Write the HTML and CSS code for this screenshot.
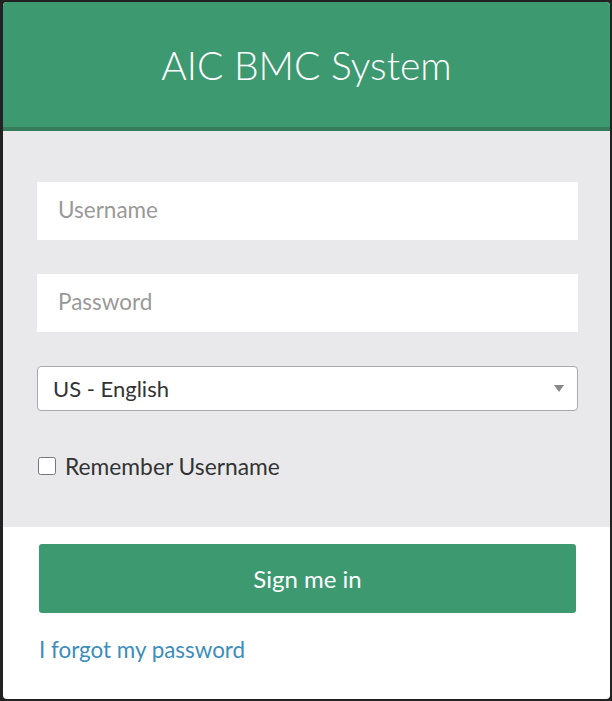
FILE: index.html
```html
<!DOCTYPE html>
<html>
<head>
  <link rel="stylesheet" href="styles.css">
</head>
<body>
  <div class="login-box">
    <div class="login-logo">AIC BMC System</div>

    <form class="login-body">
      <input class="form-control" type="text" placeholder="Username">
      <input class="form-control" type="password" placeholder="Password">
      <div class="select-wrap">
        <select class="lang-select">
          <option>US - English</option>
        </select>
        <span class="select-arrow"></span>
      </div>
      <label class="remember">
        <input type="checkbox" class="remember-box">
        <span>Remember Username</span>
      </label>
    </form>

    <div class="login-footer">
      <button class="btn-signin" type="button">Sign me in</button>
      <a href="#" class="forgot">I forgot my password</a>
    </div>
  </div>
</body>
</html>
```

FILE: styles.css
```css
html, body {
  height: 100%;
}

body {
  margin: 0;
  padding: 2px 2px 2px 3px;
  box-sizing: border-box;
  background-color: #222;
  font-family: Lato, 'Open Sans', sans-serif;
}

.login-box {
  height: 100%;
  display: flex;
  flex-direction: column;
  background: #fff;
  border-radius: 4px;
  overflow: hidden;
}

.login-logo {
  height: 125px;
  flex-shrink: 0;
  display: flex;
  align-items: center;
  justify-content: center;
  background: #3d9970;
  border-bottom: 4px solid #347c5b;
  color: #fff;
  font-size: 39px;
  font-weight: 300;
}

.login-body {
  margin: 0;
  padding: 51px 32px 0 34px;
  height: 396px;
  box-sizing: border-box;
  flex-shrink: 0;
  display: flex;
  flex-direction: column;
  background: #e9e9eb;
}

.form-control {
  box-sizing: border-box;
  height: 58px;
  margin: 0 0 34px;
  padding: 0 21px 3px;
  border: none;
  outline: none;
  background: #fff;
  font-family: inherit;
  font-size: 22.5px;
  color: #333;
}

.form-control::placeholder {
  color: #999;
}

.select-wrap {
  position: relative;
  height: 45px;
}

.lang-select {
  appearance: none;
  -webkit-appearance: none;
  width: 100%;
  height: 45px;
  padding: 0 15px;
  border: 1px solid #aaa;
  border-radius: 4px;
  background: #fff;
  font-family: inherit;
  font-size: 22px;
  color: #333;
}

.select-arrow {
  position: absolute;
  right: 14px;
  top: 19px;
  border-left: 5px solid transparent;
  border-right: 5px solid transparent;
  border-top: 7px solid #888;
}

.remember {
  display: flex;
  align-items: center;
  gap: 9px;
  margin-top: 41px;
  font-size: 22.8px;
  color: #333;
}

.remember-box {
  width: 18px;
  height: 18px;
  margin: 0 0 0 1px;
}

.login-footer {
  flex: 1;
  padding: 17px 34px 0 36px;
  display: flex;
  flex-direction: column;
}

.btn-signin {
  height: 69px;
  border: none;
  border-radius: 3px;
  background: #3d9970;
  color: #fff;
  font-family: inherit;
  font-size: 24px;
  cursor: pointer;
}

.forgot {
  margin-top: 23px;
  color: #3c8dbc;
  font-size: 22.4px;
  text-decoration: none;
}
```
